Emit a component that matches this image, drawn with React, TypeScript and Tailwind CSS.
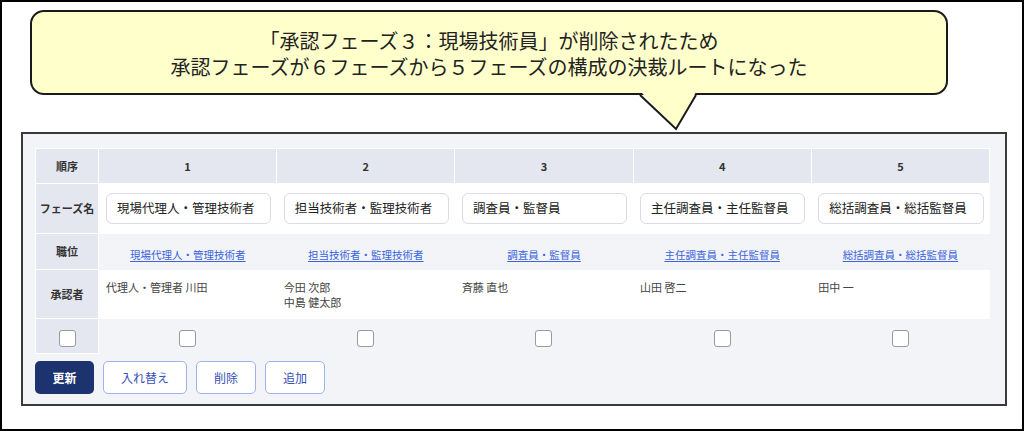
import React from "react";

type Phase = {
  no: number;
  name: string;
  approvers: string[];
};

const phases: Phase[] = [
  { no: 1, name: "現場代理人・管理技術者", approvers: ["代理人・管理者 川田"] },
  { no: 2, name: "担当技術者・監理技術者", approvers: ["今田 次郎", "中島 健太郎"] },
  { no: 3, name: "調査員・監督員", approvers: ["斉藤 直也"] },
  { no: 4, name: "主任調査員・主任監督員", approvers: ["山田 啓二"] },
  { no: 5, name: "総括調査員・総括監督員", approvers: ["田中 一"] },
];

const font = { fontFamily: '"Noto Sans CJK JP", "Noto Sans", sans-serif' };

function Checkbox() {
  return (
    <span className="inline-block h-[17px] w-[17px] rounded-[3px] border border-[#9a9a9a] bg-white align-middle" />
  );
}

function LabelCell({ children }: { children: React.ReactNode }) {
  return (
    <td className="border border-white bg-[#e4e7ef] text-center align-middle text-[11px] font-bold text-[#333]">
      {children}
    </td>
  );
}

function RouteTable() {
  return (
    <table className="w-[955px] table-fixed border-collapse">
      <colgroup>
        <col className="w-[63px]" />
        {phases.map((p) => (
          <col key={p.no} />
        ))}
      </colgroup>
      <tbody>
        {/* 順序 */}
        <tr className="h-[35px]">
          <LabelCell>順序</LabelCell>
          {phases.map((p) => (
            <td
              key={p.no}
              className="border border-white bg-[#e4e7ef] text-center align-middle text-[11px] font-bold text-[#333]"
            >
              {p.no}
            </td>
          ))}
        </tr>
        {/* フェーズ名 */}
        <tr className="h-[50px]">
          <LabelCell>フェーズ名</LabelCell>
          {phases.map((p) => (
            <td key={p.no} className="bg-white pl-[7px] pr-[6px] align-middle">
              <div className="flex h-[31px] items-center overflow-hidden whitespace-nowrap rounded-[6px] border border-[#d9dce3] bg-white pl-[10px] text-[12.5px] text-[#222]">
                {p.name}
              </div>
            </td>
          ))}
        </tr>
        {/* 職位 */}
        <tr className="h-[36px]">
          <LabelCell>職位</LabelCell>
          {phases.map((p) => (
            <td key={p.no} className="bg-[#f3f4f8] text-center align-middle">
              <a className="whitespace-nowrap text-[10.5px] text-[#3b63dc] underline underline-offset-2">{p.name}</a>
            </td>
          ))}
        </tr>
        {/* 承認者 */}
        <tr className="h-[49px]">
          <LabelCell>承認者</LabelCell>
          {phases.map((p) => (
            <td key={p.no} className="bg-white pl-[7px] pt-[10px] align-top text-[11px] leading-[15px] text-[#444]">
              {p.approvers.map((a) => (
                <div key={a}>{a}</div>
              ))}
            </td>
          ))}
        </tr>
        {/* 選択 */}
        <tr className="h-[35px]">
          <td className="border border-white bg-[#e4e7ef] text-center align-middle">
            <Checkbox />
          </td>
          {phases.map((p) => (
            <td key={p.no} className="bg-[#f3f4f8] text-center align-middle">
              <Checkbox />
            </td>
          ))}
        </tr>
      </tbody>
    </table>
  );
}

function OutlineButton({ label, width }: { label: string; width: string }) {
  return (
    <button
      className={`${width} h-[33px] rounded-[5px] border border-[#9fb3f0] bg-white text-[12px] text-[#3550b8]`}
    >
      {label}
    </button>
  );
}

export default function App() {
  return (
    <div className="relative h-[431px] w-[1024px] overflow-hidden border-2 border-black bg-white" style={font}>
      {/* 吹き出し */}
      <div className="ml-[28px] mt-[8px] flex h-[85px] w-[918px] flex-col items-center justify-center gap-[6px] rounded-[14px] border-2 border-[#1a1a1a] bg-[#ffffcc] pt-[3px] text-[20px] leading-[20px] text-[#222]">
        <div>「承認フェーズ３：現場技術員」が削除されたため</div>
        <div>承認フェーズが６フェーズから５フェーズの構成の決裁ルートになった</div>
      </div>
      <svg className="absolute left-[637px] top-[90px]" width="60" height="40" viewBox="0 0 60 40">
        <polygon points="2,0 37,37 57,0" fill="#ffffcc" />
        <polyline points="1,3 37,37 57,3" fill="none" stroke="#1a1a1a" strokeWidth="2" strokeLinejoin="miter" />
      </svg>

      {/* 決裁ルート */}
      <div className="ml-[19px] mt-[37px] h-[274px] w-[986px] border-2 border-[#3a3a3a] bg-[#f3f4f8] pl-[12px] pt-[14px]">
        <RouteTable />
        <div className="mt-[7px] flex gap-[9px]">
          <button className="h-[33px] w-[59px] rounded-[5px] bg-[#1d3370] text-[12px] font-bold text-white">
            更新
          </button>
          <OutlineButton label="入れ替え" width="w-[84px]" />
          <OutlineButton label="削除" width="w-[60px]" />
          <OutlineButton label="追加" width="w-[60px]" />
        </div>
      </div>
    </div>
  );
}
